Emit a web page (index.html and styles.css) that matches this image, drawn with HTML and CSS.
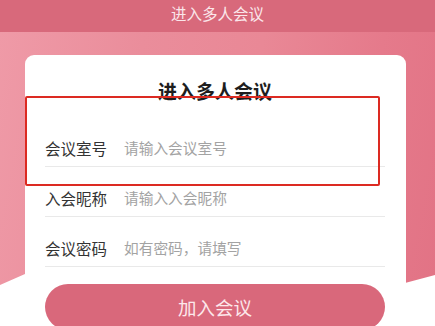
FILE: index.html
```html
<!DOCTYPE html>
<html lang="zh">
<head>
<meta charset="utf-8">
<title>进入多人会议</title>
<link rel="stylesheet" href="styles.css">
</head>
<body>
<div class="page">
  <header class="topbar">进入多人会议</header>
  <div class="stage">
    <div class="backdrop"></div>
    <div class="card">
      <h1 class="card-title">进入多人会议</h1>
      <div class="field">
        <span class="label">会议室号</span>
        <span class="placeholder">请输入会议室号</span>
      </div>
      <div class="field">
        <span class="label">入会昵称</span>
        <span class="placeholder">请输入入会昵称</span>
      </div>
      <div class="field">
        <span class="label">会议密码</span>
        <span class="placeholder">如有密码，请填写</span>
      </div>
      <button class="join">加入会议</button>
    </div>
    <div class="highlight"></div>
  </div>
</div>
</body>
</html>
```

FILE: styles.css
```css
* { box-sizing: border-box; }
html, body {
  margin: 0;
  padding: 0;
  background: #ffffff;
  font-family: "Noto Sans CJK SC", "Noto Sans", sans-serif;
}
.page {
  width: 435px;
  height: 326px;
  overflow: hidden;
  position: relative;
}
.topbar {
  height: 32px;
  background: #d8697b;
  color: #fbe6ea;
  font-size: 15.5px;
  line-height: 26px;
  text-align: center;
  position: relative;
  z-index: 2;
}
.stage {
  position: relative;
  padding: 23px 29px 0 25px;
}
.backdrop {
  position: absolute;
  left: 0;
  top: 0;
  width: 435px;
  height: 260px;
  background: linear-gradient(100deg, #ef9aa7 0%, #ea8d9b 30%, #e98896 55%, #e57a8b 80%, #e27385 100%);
  clip-path: polygon(0 0, 100% 0, 100% 243px, 405px 251px, 25px 242px, 0 253px);
  z-index: 0;
}
.card {
  position: relative;
  z-index: 1;
  background: #ffffff;
  border-radius: 9px;
  width: 381px;
  height: 300px;
  padding: 23px 21px 0 20px;
}
.card-title {
  margin: 0 0 13px;
  font-size: 19px;
  line-height: 26px;
  font-weight: 700;
  color: #1e1e1e;
  text-align: center;
}
.field {
  display: flex;
  align-items: center;
  height: 50px;
  padding-top: 12px;
  border-bottom: 1px solid #e9e9e9;
}
.label {
  width: 79px;
  font-size: 15.5px;
  color: #333333;
}
.placeholder {
  font-size: 14.7px;
  color: #a3a3a3;
}
.join {
  display: block;
  width: 100%;
  height: 46px;
  margin-top: 17px;
  border: none;
  border-radius: 23px;
  background: #d9687b;
  color: #fde8ec;
  font-family: inherit;
  font-size: 18.5px;
  line-height: 46px;
  padding: 0;
}
.highlight {
  position: absolute;
  z-index: 3;
  left: 25px;
  top: 64px;
  width: 355px;
  height: 90px;
  border: 2px solid #dc2a22;
  border-radius: 2px;
}
```
